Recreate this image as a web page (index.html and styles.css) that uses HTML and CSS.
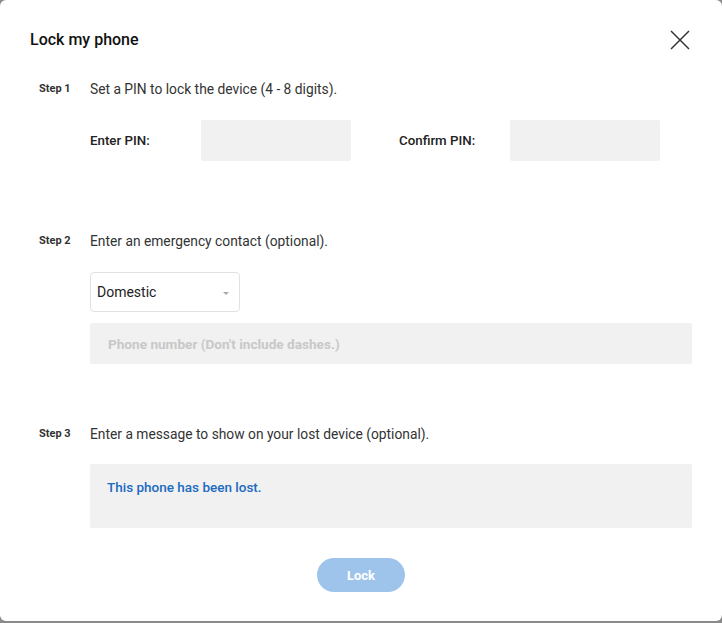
FILE: index.html
```html
<!DOCTYPE html>
<html lang="en">
<head>
    <meta charset="UTF-8">
    <meta name="viewport" content="width=device-width, initial-scale=1.0">
    <title>Lock my phone</title>
    <link rel="stylesheet" href="styles.css">
</head>
<body>
    <div class="dialog">
        <div class="dialog-header">
            <h1 class="dialog-title">Lock my phone</h1>
            <button class="close-btn" aria-label="Close">
                <svg width="20" height="20" viewBox="0 0 20 20">
                    <path d="M1 1 L19 19 M19 1 L1 19" stroke="#333" stroke-width="1.5" fill="none"/>
                </svg>
            </button>
        </div>

        <!-- Step 1 -->
        <section class="step step-one">
            <span class="step-label">Step 1</span>
            <div class="step-body">
                <p class="step-text">Set a PIN to lock the device (4 - 8 digits).</p>
                <div class="pin-row">
                    <label class="pin-label" for="pin">Enter PIN:</label>
                    <input class="field pin-input" type="password" id="pin">
                    <label class="pin-label pin-label-confirm" for="pin-confirm">Confirm PIN:</label>
                    <input class="field pin-input" type="password" id="pin-confirm">
                </div>
            </div>
        </section>

        <!-- Step 2 -->
        <section class="step step-two">
            <span class="step-label">Step 2</span>
            <div class="step-body">
                <p class="step-text">Enter an emergency contact (optional).</p>
                <div class="select-box">
                    <span>Domestic</span>
                    <span class="select-arrow"></span>
                </div>
                <input class="field phone-input" type="text" placeholder="Phone number (Don't include dashes.)">
            </div>
        </section>

        <!-- Step 3 -->
        <section class="step step-three">
            <span class="step-label">Step 3</span>
            <div class="step-body">
                <p class="step-text">Enter a message to show on your lost device (optional).</p>
                <textarea class="field message-input">This phone has been lost.</textarea>
            </div>
        </section>

        <div class="actions">
            <button class="lock-btn" disabled>Lock</button>
        </div>
    </div>
</body>
</html>
```

FILE: styles.css
```css
/* Base */
body {
    margin: 0;
    background: #8a8a8a;
    font-family: Roboto, "Noto Sans", sans-serif;
    color: #222;
}

.dialog {
    box-sizing: border-box;
    width: 722px;
    height: 621px;
    background: #fff;
    border-radius: 6px;
    padding: 28px 30px 0 30px;
}

.dialog-header {
    display: flex;
    justify-content: space-between;
    align-items: center;
    padding-right: 2px;
}

.dialog-title {
    margin: 0;
    font-size: 16px;
    line-height: 24px;
    font-weight: 500;
    color: #111;
}

.close-btn {
    border: none;
    background: none;
    padding: 0;
    width: 20px;
    height: 20px;
    cursor: pointer;
}

/* Steps */
.step {
    display: grid;
    grid-template-columns: 51px 1fr;
    padding-left: 9px;
}

.step-one {
    margin-top: 27px;
}

.step-two {
    margin-top: 70px;
}

.step-three {
    margin-top: 60px;
}

.step-label {
    font-size: 11px;
    line-height: 20px;
    font-weight: 700;
    color: #333;
}

.step-text {
    margin: 0;
    font-size: 13.8px;
    line-height: 20px;
    color: #333;
}

.field {
    box-sizing: border-box;
    border: none;
    background: #f1f1f1;
    border-radius: 2px;
    font-family: inherit;
    outline: none;
}

/* PIN row */
.pin-row {
    display: flex;
    align-items: center;
    margin-top: 21px;
}

.pin-label {
    width: 111px;
    font-size: 13.3px;
    font-weight: 500;
    color: #222;
}

.pin-label-confirm {
    margin-left: 48px;
}

.pin-input {
    width: 150px;
    height: 41px;
}

/* Emergency contact */
.select-box {
    box-sizing: border-box;
    display: flex;
    justify-content: space-between;
    align-items: center;
    width: 150px;
    height: 40px;
    margin-top: 21px;
    padding: 0 10px 0 6px;
    border: 1px solid #e2e2e2;
    border-radius: 4px;
    font-size: 14px;
    color: #222;
}

.select-arrow {
    width: 0;
    height: 0;
    border-left: 3px solid transparent;
    border-right: 3px solid transparent;
    border-top: 3px solid #aaa;
    margin-top: 2px;
}

.phone-input {
    display: block;
    width: 100%;
    height: 41px;
    margin-top: 11px;
    padding: 0 18px;
    font-size: 13.6px;
    font-weight: 700;
}

.phone-input::placeholder {
    color: #c8c8c8;
}

/* Message */
.message-input {
    display: block;
    width: 100%;
    height: 64px;
    margin-top: 20px;
    padding: 14px 17px;
    resize: none;
    font-size: 13.5px;
    line-height: 18px;
    font-weight: 500;
    color: #1c6ac0;
}

/* Actions */
.actions {
    display: flex;
    justify-content: center;
    margin-top: 30px;
}

.lock-btn {
    width: 88px;
    height: 34px;
    border: none;
    border-radius: 17px;
    background: #9fc4ec;
    color: #fff;
    font-family: inherit;
    font-size: 13px;
    font-weight: 700;
}
```
